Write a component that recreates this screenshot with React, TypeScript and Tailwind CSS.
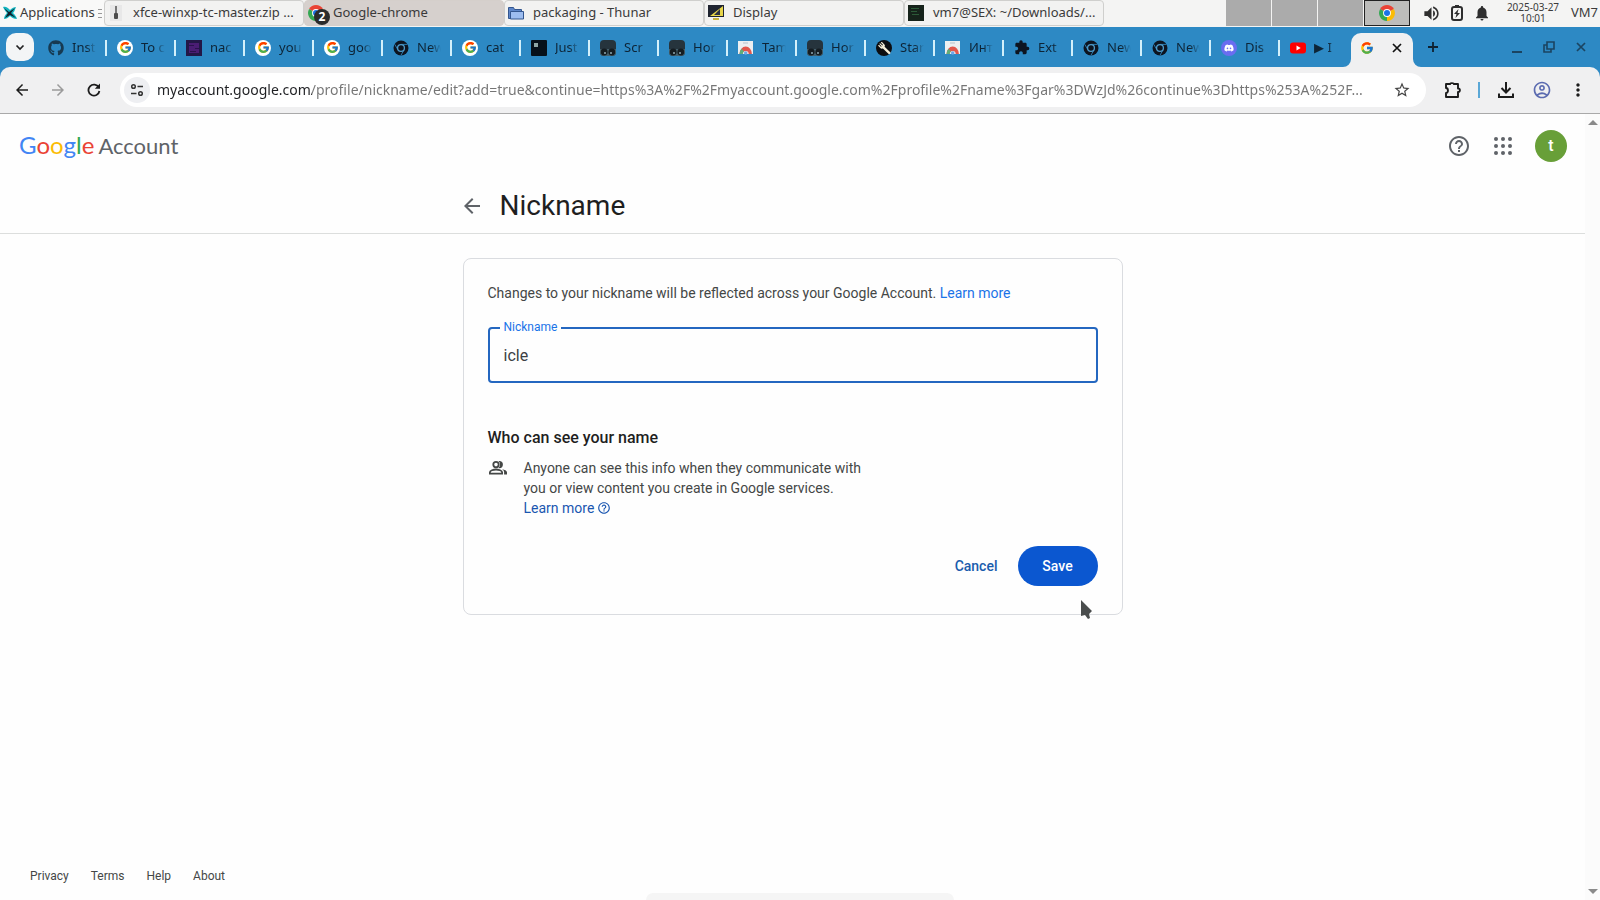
import type { ReactNode } from "react";
import { FaDiscord, FaGithub } from "react-icons/fa";
import { FcGoogle } from "react-icons/fc";
import {
  MdArrowBack,
  MdArrowForward,
  MdExtension,
  MdHelpOutline,
  MdMoreVert,
  MdNotifications,
  MdOutlineAccountCircle,
  MdStarBorder,
  MdVolumeUp,
} from "react-icons/md";

function GoogleFavicon() {
  return (
    <span className="flex size-4 items-center justify-center rounded-full bg-white">
      <FcGoogle size={13} />
    </span>
  );
}

function ChromeDark() {
  return (
    <svg viewBox="0 0 16 16" className="size-4">
      <circle cx="8" cy="8" r="7.5" fill="#0d1420" />
      <path d="M8 4.4h6.4M4.9 9.8 1.8 4.4M11.1 9.8 8 15.2" stroke="#2f84bd" strokeWidth="0.9" />
      <circle cx="8" cy="8" r="3.4" fill="#0d1420" stroke="#4f9ccc" strokeWidth="1.3" />
    </svg>
  );
}

function ChromeColor({ className }: { className: string }) {
  return (
    <svg viewBox="0 0 16 16" className={className}>
      <path d="M8 8 1.1 4A8 8 0 0 1 14.9 4z" fill="#ea4335" />
      <path d="M8 8 14.9 4A8 8 0 0 1 8 16z" fill="#fbbc04" />
      <path d="M8 8V16A8 8 0 0 1 1.1 4z" fill="#34a853" />
      <circle cx="8" cy="8" r="3.9" fill="#fff" />
      <circle cx="8" cy="8" r="3" fill="#1a73e8" />
    </svg>
  );
}

function Tampermonkey() {
  return (
    <svg viewBox="0 0 16 16" className="size-4">
      <rect width="16" height="16" rx="4" fill="#26343d" />
      <path d="M0 9h16v3a4 4 0 0 1-4 4H4a4 4 0 0 1-4-4z" fill="#46606c" />
      <circle cx="4.2" cy="12" r="3.4" fill="#151c21" />
      <circle cx="11.8" cy="12" r="3.4" fill="#151c21" />
      <circle cx="5" cy="13" r="1" fill="#8fa9b3" />
      <circle cx="11" cy="13" r="1" fill="#8fa9b3" />
    </svg>
  );
}

function WebStore() {
  return (
    <svg viewBox="0 0 16 16" className="size-4">
      <path d="M0 1h15v13H0z" fill="#eceff1" />
      <path d="M5 2.5h5v1H5z" fill="#b9c3cb" />
      <path d="M1.5 14a6.2 7.5 0 0 1 12.4 0h-3.2a3 3 0 0 0-6 0z" fill="#e2574c" />
      <path d="M1.5 14a6.2 7.5 0 0 1 2-5.2L6 11.5A3 3 0 0 0 4.700 14z" fill="#5fae7a" />
      <circle cx="7.7" cy="13" r="1.8" fill="#6fa5e8" />
    </svg>
  );
}

function PurpleSite() {
  return (
    <svg viewBox="0 0 16 16" className="size-4">
      <path d="M0 0h16v16H0z" fill="#231747" />
      <path d="M3 3h10v10H3z" fill="#4a1d74" />
      <path d="M3 5h5v1H3zM9 8h4v1H9zM4 11h6v1H4z" fill="#2a124d" />
    </svg>
  );
}

function JustSite() {
  return (
    <svg viewBox="0 0 16 16" className="size-4">
      <rect width="16" height="16" rx="1" fill="#06101a" />
      <path d="M3 3h4v4H3z" fill="#8fa5a5" />
    </svg>
  );
}

function ForkSite() {
  return (
    <svg viewBox="0 0 16 16" className="size-4">
      <circle cx="8" cy="8" r="8" fill="#0c0d10" />
      <g stroke="#f5edd6" strokeLinecap="round" fill="none">
        <path d="M5.6 2.5 8 5M4 3.8l2.500 2.500M2.800 5.500 5.300 8" strokeWidth="1.1" />
        <path d="M6 7.5 7.7 5.8M7.5 7.3l5.700 5.500" strokeWidth="2.4" />
      </g>
    </svg>
  );
}

function YouTube() {
  return (
    <svg viewBox="0 0 16 16" className="size-4">
      <rect y="2.5" width="16" height="11" rx="3" fill="#f00" />
      <path d="m6.5 5.5 4.2 2.5-4.2 2.5z" fill="#fff" />
    </svg>
  );
}

function CloseIcon() {
  return (
    <svg viewBox="0 0 10 10" className="size-[10px]">
      <path d="m1 1 8 8M9 1 1 9" stroke="currentColor" strokeWidth="1.7" />
    </svg>
  );
}

function GroupIcon() {
  return (
    <svg viewBox="0 0 20 20" className="size-5 shrink-0">
      <g fill="none" stroke="currentColor" strokeWidth="1.8">
        <circle cx="8" cy="6.6" r="2.7" />
        <path d="M1.9 15.6v-1.3c0-1.800 3.600-2.800 6.100-2.800s6.100 1 6.100 2.800v1.300z" />
      </g>
      <path d="M11.3 10.2a3.6 3.6 0 0 0 0-7.2c-.3 0-.6 0-.9.1a4.6 4.6 0 0 1 0 7c.3.1.6.1.9.1z" fill="currentColor" />
      <path d="M14.2 11.2c1.2.8 1.9 1.800 1.900 3.100v2.200H19v-2.200c0-1.600-2.400-2.700-4.800-3.100z" fill="currentColor" />
    </svg>
  );
}

const tabs: { title: string; icon: ReactNode }[] = [
  { title: "Inst", icon: <FaGithub size={16} color="#173a52" /> },
  { title: "To c", icon: <GoogleFavicon /> },
  { title: "nac", icon: <PurpleSite /> },
  { title: "you", icon: <GoogleFavicon /> },
  { title: "goo", icon: <GoogleFavicon /> },
  { title: "New", icon: <ChromeDark /> },
  { title: "cat", icon: <GoogleFavicon /> },
  { title: "Just", icon: <JustSite /> },
  { title: "Scr", icon: <Tampermonkey /> },
  { title: "Hor", icon: <Tampermonkey /> },
  { title: "Tam", icon: <WebStore /> },
  { title: "Hor", icon: <Tampermonkey /> },
  { title: "Star", icon: <ForkSite /> },
  { title: "Инт", icon: <WebStore /> },
  { title: "Ext", icon: <MdExtension size={17} color="#0d1420" /> },
  { title: "New", icon: <ChromeDark /> },
  { title: "New", icon: <ChromeDark /> },
  {
    title: "Dis",
    icon: (
      <span className="flex size-4 items-center justify-center rounded-full bg-[#6a6df0]">
        <FaDiscord size={10} color="#fff" />
      </span>
    ),
  },
  { title: "▶ I", icon: <YouTube /> },
];

const tasks: { title: string; active?: boolean; icon: ReactNode }[] = [
  {
    title: "xfce-winxp-tc-master.zip ...",
    icon: (
      <svg viewBox="0 0 16 16" className="size-4">
        <path d="M2 0h12v16H2z" fill="#e8e8e8" />
        <path d="M7 1h2v9H7z" fill="#777" />
        <rect x="6" y="8" width="4" height="6" rx="1" fill="#4c4c4c" />
      </svg>
    ),
  },
  {
    title: "Google-chrome",
    active: true,
    icon: (
      <span className="relative block size-4">
        <ChromeColor className="size-4" />
        <span className="absolute top-1 left-1.5 flex size-4 items-center justify-center rounded-full bg-[#2b2b2b] text-xs font-bold text-white">
          2
        </span>
      </span>
    ),
  },
  {
    title: "packaging - Thunar",
    icon: (
      <svg viewBox="0 0 16 16" className="size-4">
        <path d="M.5 2.5h5l1 2h7v9H.5z" fill="#5d86c9" stroke="#33568f" />
        <path d="M2.5 6.5h13v7.5h-13z" fill="#9dbdf0" stroke="#33568f" />
      </svg>
    ),
  },
  {
    title: "Display",
    icon: (
      <svg viewBox="0 0 16 16" className="size-4">
        <path d="M0 0h16v12H0z" fill="#1f2430" />
        <path d="M15 1v10H2z" fill="#e8d64a" />
        <path d="m6 10 6-6v6z" fill="#2c3142" />
        <path d="M5 13h6v2H5z" fill="#c8b23c" />
      </svg>
    ),
  },
  {
    title: "vm7@SEX: ~/Downloads/...",
    icon: (
      <svg viewBox="0 0 16 16" className="size-4">
        <path d="M0 0h16v16H0z" fill="#16231b" />
        <path d="M3 3h8v1H3zM3 6h6v1H3zM4 9h7v1H4z" fill="#2c5a38" />
      </svg>
    ),
  },
];

const footerLinks = ["Privacy", "Terms", "Help", "About"];

function Taskbar() {
  return (
    <div className="flex h-[27px] items-start overflow-hidden bg-[#f4f4f3] text-[13px] text-[#3a3a3a]">
      <button className="flex h-[26px] w-[104px] shrink-0 items-center gap-[3px] bg-[#f9f9f8] pl-[3px]">
        <svg viewBox="0 0 14 14" className="size-[14px] shrink-0">
          <path d="M0 1c3-1 5 1 7 3 2-2 4-3 6-3-1 2-1 4-3 6 2 2 3 3 4 6-3 0-5-1-7-3-2 2-4 3-6 3 0-2 1-4 3-6C2 5 1 3 0 1z" fill="#12b5c0" />
          <path d="M1 2l5 4 6-4-4 5 5 5-6-3-5 3 3-5z" fill="#13212b" />
        </svg>
        Applications
        <span className="flex flex-col gap-[3px]">
          <span className="h-px w-1 bg-[#999]" />
          <span className="h-px w-1 bg-[#999]" />
          <span className="h-px w-1 bg-[#999]" />
        </span>
      </button>
      {tasks.map((task) => (
        <button
          key={task.title}
          className={`flex h-[26px] w-[200px] shrink-0 items-center gap-2 rounded border pl-[3px] ${
            task.active ? "border-[#d5cfcb] bg-[#d6d0cd]" : "border-[#cfcfcd] bg-[#f2f2f1]"
          }`}
        >
          <span className="size-4 shrink-0">{task.icon}</span>
          <span className="pl-px whitespace-nowrap">{task.title}</span>
        </button>
      ))}
      <div className="ml-auto flex h-[26px] shrink-0 items-center">
        <div className="flex h-full gap-px">
          <div className="w-[45px] bg-[#ababab]" />
          <div className="w-[45px] bg-[#ababab]" />
          <div className="w-[45px] bg-[#ababab]" />
          <div className="flex w-[46px] items-center justify-center border border-[#222] bg-[#bdbdbb]">
            <ChromeColor className="size-4" />
          </div>
        </div>
        <div className="flex items-center gap-2 pr-[5px] pl-3 text-[#2e2e2e]">
          <MdVolumeUp size={19} />
          <svg viewBox="0 0 16 16" className="size-4">
            <rect x="3" y="2" width="10" height="13" rx="2" fill="none" stroke="currentColor" strokeWidth="2" />
            <path d="M6 0h4v2H6z" fill="currentColor" />
            <path d="M9.5 4 5 9h2.5l-1 4L11 8H8.5z" fill="currentColor" />
          </svg>
          <MdNotifications size={18} />
        </div>
        <div className="flex w-[74px] flex-col items-center text-[10px] leading-[11px]">
          <span>2025-03-27</span>
          <span>10:01</span>
        </div>
        <div className="w-[30px] pl-px">VM7</div>
      </div>
    </div>
  );
}

function TabStrip() {
  return (
    <div className="flex h-10 items-end overflow-hidden bg-[#2d89c4] pl-1.5">
      <button aria-label="Search tabs" className="mr-1 mb-1.5 flex size-7 shrink-0 items-center justify-center rounded-[10px] bg-[#f3f5f6]">
        <svg viewBox="0 0 10 10" className="size-[10px]">
          <path d="m1.5 3.5 3.5 3.5 3.5-3.5" fill="none" stroke="#222" strokeWidth="1.7" />
        </svg>
      </button>
      {tabs.map((tab, i) => (
        <button key={i} className="flex h-[34px] w-[69px] shrink-0 items-center pb-[5px] pl-[10px] text-[13px] text-[#0d2436]">
          <span className="flex size-4 shrink-0 items-center justify-center">{tab.icon}</span>
          <span className="ml-2 w-6 overflow-hidden text-left whitespace-nowrap mask-r-from-60%">{tab.title}</span>
          {i < tabs.length - 1 && <span className="ml-auto h-4 w-0.5 bg-[#d3f0fb]" />}
        </button>
      ))}
      <div className="relative ml-0.5 flex h-[34px] w-[62px] shrink-0 items-center justify-between rounded-t-[10px] bg-[#f0f0f1] pr-[11px] pb-[5px] pl-[9px]">
        <svg viewBox="0 0 8 8" className="absolute bottom-0 -left-2 size-2">
          <path d="M8 0v8H0a8 8 0 0 0 8-8z" fill="#f0f0f1" />
        </svg>
        <svg viewBox="0 0 8 8" className="absolute -right-2 bottom-0 size-2">
          <path d="M0 0v8h8a8 8 0 0 1-8-8z" fill="#f0f0f1" />
        </svg>
        <FcGoogle size={14} />
        <button aria-label="Close tab" className="text-[#111]">
          <CloseIcon />
        </button>
      </div>
      <button aria-label="New tab" className="mb-3 ml-3 flex size-4 items-center justify-center">
        <svg viewBox="0 0 12 12" className="size-3">
          <path d="M6 1v10M1 6h10" stroke="#0f2130" strokeWidth="1.8" />
        </svg>
      </button>
      <div className="mr-[11px] mb-3 ml-auto flex gap-4 text-[#1b4461]">
        <button aria-label="Minimize" className="flex size-4 items-end justify-center pb-0.5">
          <span className="h-0.5 w-[10px] bg-[#1b4461]" />
        </button>
        <button aria-label="Restore" className="flex size-4 items-center justify-center">
          <svg viewBox="0 0 12 12" className="size-3">
            <path d="M4 1h7v7H4zM8 8v3H1V4h3" fill="none" stroke="currentColor" strokeWidth="1.6" />
          </svg>
        </button>
        <button aria-label="Close window" className="flex size-4 items-center justify-center">
          <CloseIcon />
        </button>
      </div>
    </div>
  );
}

function Toolbar() {
  return (
    <div className="bg-[#2d89c4]">
      <div className="flex h-[47px] items-center rounded-t-[10px] border-b border-[#a9a9a9] bg-[#f0f0f1] px-3 text-[#1c1c1c]">
        <div className="flex items-center gap-4">
          <button aria-label="Back" className="flex size-5 items-center justify-center">
            <MdArrowBack size={18} />
          </button>
          <button aria-label="Forward" className="flex size-5 items-center justify-center text-[#9b9b9b]">
            <MdArrowForward size={18} />
          </button>
          <button aria-label="Reload" className="flex size-5 items-center justify-center">
            <svg viewBox="0 0 14 14" className="size-[14px]">
              <path d="M11.8 4.5A5.5 5.5 0 1 0 12.4 8" fill="none" stroke="currentColor" strokeWidth="1.8" />
              <path d="M13 .6v5.2H7.8z" fill="currentColor" />
            </svg>
          </button>
        </div>
        <div className="ml-4 flex h-[34px] flex-1 items-center rounded-full bg-white pr-[15px] pl-1">
          <button aria-label="View site information" className="flex size-[26px] items-center justify-center rounded-full bg-[#eeeff2]">
            <svg viewBox="0 0 14 14" className="size-[14px]" fill="none" stroke="#333" strokeWidth="1.5">
              <circle cx="3.5" cy="3.5" r="1.8" />
              <path d="M7.5 3.5H13M1 10.5h5.5" />
              <circle cx="10.5" cy="10.5" r="1.8" />
            </svg>
          </button>
          <input
            aria-label="Address"
            defaultValue="myaccount.google.com/profile/nickname/edit?add=true&continue=https%3A%2F%2Fmyaccount.google.com%2Fprofile%2Fname%3Fgar%3DWzJd%26continue%3Dhttps%253A%252F..."
            className="ml-[7px] min-w-0 flex-1 bg-[linear-gradient(90deg,#202124_155px,#757575_155px)] bg-clip-text pb-px text-sm text-transparent outline-none"
          />
          <button aria-label="Bookmark this tab">
            <MdStarBorder size={18} color="#444" />
          </button>
        </div>
        <div className="ml-4 flex items-center">
          <button aria-label="Extensions" className="pl-[3px]">
            <svg viewBox="0 0 17 16" className="h-4 w-[17px]" fill="none" stroke="currentColor" strokeWidth="1.9">
              <path d="M1 2h4.2c0-1 3.6-1 3.6 0H13v4.5c2.5-.3 2.5 3.8 0 3.5V15H1v-4c2.6 0 2.6-5 0-5z" strokeLinejoin="round" />
            </svg>
          </button>
          <span className="ml-4 h-4 w-0.5 bg-[#5aa7d6]" />
          <button aria-label="Downloads" className="ml-[18px]">
            <svg viewBox="0 0 16 16" className="size-4" fill="none" stroke="currentColor" strokeWidth="2">
              <path d="M8 0v10M3.5 6 8 10.5 12.5 6M1 11.5V15h14v-3.5" />
            </svg>
          </button>
          <button aria-label="Profile" className="ml-[18px]">
            <MdOutlineAccountCircle size={20} color="#5b6bb0" />
          </button>
          <button aria-label="Menu" className="ml-4">
            <MdMoreVert size={20} />
          </button>
        </div>
      </div>
    </div>
  );
}

function Header() {
  return (
    <header className="border-b border-[#dcdedd]">
      <div className="flex h-16 items-center justify-between pr-[18px] pl-[19px]">
        <a href="#home" className="flex items-baseline gap-1 pb-0.5 font-[Lato,sans-serif] text-[22px] text-[#5f6368]">
          <span className="text-2xl">
            <span className="text-[#4285f4]">G</span>
            <span className="text-[#ea4335]">o</span>
            <span className="text-[#fbbc04]">o</span>
            <span className="text-[#4285f4]">g</span>
            <span className="text-[#34a853]">l</span>
            <span className="text-[#ea4335]">e</span>
          </span>
          Account
        </a>
        <div className="flex items-center gap-5 text-[#5f6368]">
          <button aria-label="Help">
            <MdHelpOutline size={24} />
          </button>
          <button aria-label="Google apps">
            <svg viewBox="0 0 24 24" className="size-6" fill="currentColor">
              {[5, 12, 19].map((y) => [5, 12, 19].map((x) => <circle key={`${x}-${y}`} cx={x} cy={y} r="2" />))}
            </svg>
          </button>
          <button aria-label="Google Account" className="flex size-8 items-center justify-center rounded-full bg-[#689f38] text-base font-medium text-white">
            t
          </button>
        </div>
      </div>
      <div className="mx-auto flex h-[55px] w-full max-w-[660px] items-center gap-4">
        <a href="#back" aria-label="Back" className="-ml-[3px] text-[#5f6368]">
          <MdArrowBack size={24} />
        </a>
        <h1 className="text-[28px] leading-9 text-[#1f1f1f]">Nickname</h1>
      </div>
    </header>
  );
}

function NicknameCard() {
  return (
    <form className="mx-auto mt-6 w-full max-w-[660px] rounded-lg border border-[#dadce0] px-6 pt-6 pb-7 text-sm leading-5 text-[#444746]">
      <p>
        Changes to your nickname will be reflected across your Google Account.{" "}
        <a href="#learn" className="text-[#1a73e8]">
          Learn more
        </a>
      </p>
      <div className="relative mt-6">
        <label htmlFor="nickname" className="absolute -top-2 left-3 bg-[#fefefe] px-1 text-xs text-[#1a73e8]">
          Nickname
        </label>
        <input
          id="nickname"
          defaultValue="icle"
          className="h-14 w-full rounded border-2 border-[#2467c0] px-[14px] text-base text-[#3c4043] outline-none"
        />
      </div>
      <h2 className="mt-[43px] text-base leading-6 font-medium text-[#1f1f1f]">Who can see your name</h2>
      <div className="mt-2 flex gap-4">
        <GroupIcon />
        <p className="max-w-[360px]">
          Anyone can see this info when they communicate with you or view content you create in Google services.{" "}
          <a href="#visibility" className="inline-flex items-center gap-[3px] text-[#1a56b0]">
            Learn more
            <MdHelpOutline size={14} />
          </a>
        </p>
      </div>
      <div className="mt-7 flex justify-end gap-2 font-medium">
        <button type="button" className="h-10 px-3 text-[#1a5cad]">
          Cancel
        </button>
        <button type="submit" className="h-10 w-20 rounded-full bg-[#0b57d0] text-white">
          Save
        </button>
      </div>
    </form>
  );
}

export default function App() {
  return (
    <div className="relative flex min-h-screen flex-col overflow-hidden bg-[#fefefe] font-['Noto_Sans',sans-serif]">
      <Taskbar />
      <TabStrip />
      <Toolbar />
      <div className="flex flex-1">
        <main className="flex flex-1 flex-col font-[Roboto,sans-serif]">
          <Header />
          <NicknameCard />
          <footer className="mt-auto flex gap-[22px] pb-[15px] pl-[30px] text-xs leading-[18px] text-[#444746]">
            {footerLinks.map((link) => (
              <a key={link} href={`#${link.toLowerCase()}`}>
                {link}
              </a>
            ))}
          </footer>
        </main>
        <div className="flex w-[15px] flex-col items-center justify-between bg-[#fbfbfb] py-1.5">
          <svg viewBox="0 0 10 5" className="h-[5px] w-[10px]">
            <path d="M5 0l5 5H0z" fill="#8a8a8a" />
          </svg>
          <svg viewBox="0 0 10 5" className="h-[5px] w-[10px]">
            <path d="M0 0h10L5 5z" fill="#8a8a8a" />
          </svg>
        </div>
      </div>
      <div className="absolute bottom-0 left-1/2 h-[7px] w-[308px] -translate-x-1/2 rounded-t-lg bg-[#f5f5f5]" />
      <svg viewBox="0 0 11 19" className="absolute top-[600px] left-[1081px] h-[19px] w-[11px]">
        <path d="M0 0v16l4-1 3 4 2-1-1-4 3-3z" fill="#4a4d4d" />
      </svg>
    </div>
  );
}
